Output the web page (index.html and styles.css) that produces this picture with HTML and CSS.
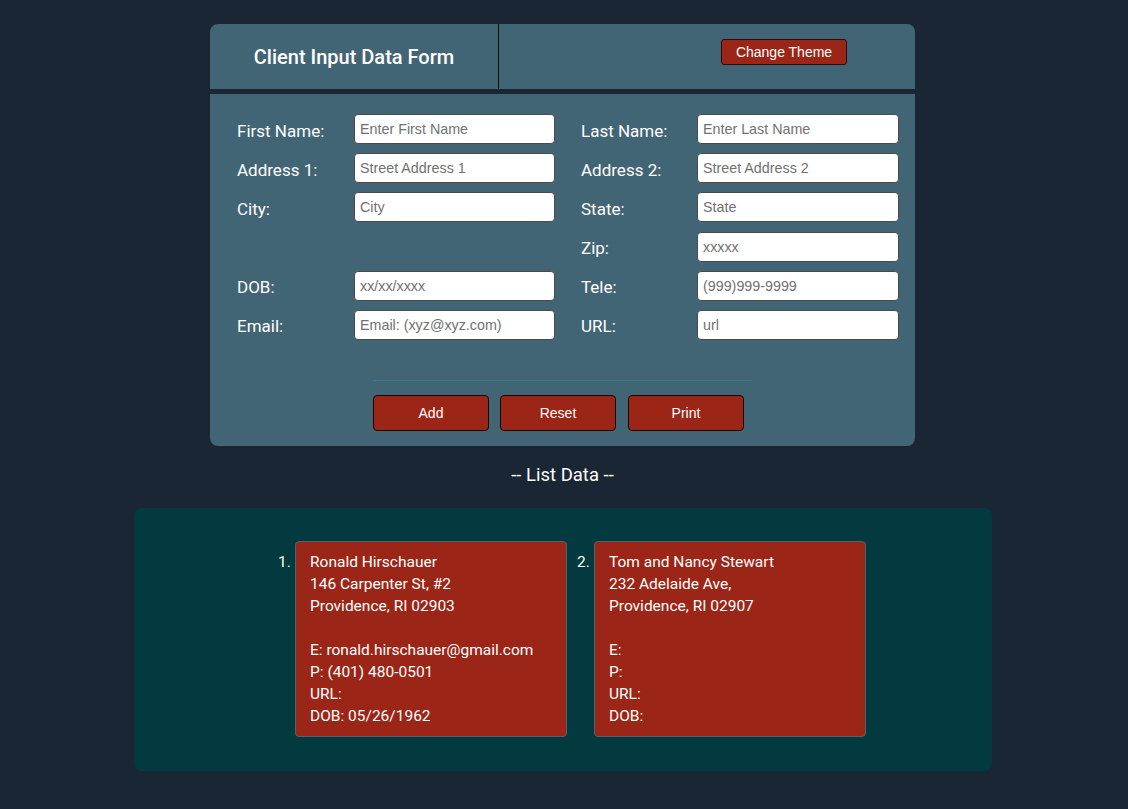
FILE: index.html
```html
<!DOCTYPE html>
<html>
<head>
<meta charset="utf-8">
<title>Client Input Data Form</title>
<link rel="stylesheet" href="styles.css">
</head>
<body>
<div class="page">
  <section class="form-panel">
    <header class="form-header">
      <div class="title-cell"><h1>Client Input Data Form</h1></div>
      <div class="theme-cell"><button class="theme-btn">Change Theme</button></div>
    </header>
    <form class="form-body">
      <div class="grid">
        <label>First Name:</label><input placeholder="Enter First Name">
        <label>Last Name:</label><input class="r" placeholder="Enter Last Name">
        <label>Address 1:</label><input placeholder="Street Address 1">
        <label>Address 2:</label><input class="r" placeholder="Street Address 2">
        <label>City:</label><input placeholder="City">
        <label>State:</label><input class="r" placeholder="State">
        <span></span><span></span>
        <label>Zip:</label><input class="r" placeholder="xxxxx">
        <label>DOB:</label><input placeholder="xx/xx/xxxx">
        <label>Tele:</label><input class="r" placeholder="(999)999-9999">
        <label>Email:</label><input placeholder="Email: (xyz@xyz.com)">
        <label>URL:</label><input class="r" placeholder="url">
      </div>
      <div class="actions">
        <hr class="sep">
        <div class="btns">
          <button type="button" class="btn">Add</button>
          <button type="button" class="btn">Reset</button>
          <button type="button" class="btn">Print</button>
        </div>
      </div>
    </form>
  </section>

  <h2 class="list-title">-- List Data --</h2>

  <section class="list-panel">
    <ol class="cards">
      <li class="item">
        <div class="card">
          <div>Ronald Hirschauer</div>
          <div>146 Carpenter St, #2</div>
          <div>Providence, RI 02903</div>
          <div>&nbsp;</div>
          <div>E: ronald.hirschauer@gmail.com</div>
          <div>P: (401) 480-0501</div>
          <div>URL:</div>
          <div>DOB: 05/26/1962</div>
        </div>
      </li>
      <li class="item">
        <div class="card">
          <div>Tom and Nancy Stewart</div>
          <div>232 Adelaide Ave,</div>
          <div>Providence, RI 02907</div>
          <div>&nbsp;</div>
          <div>E:</div>
          <div>P:</div>
          <div>URL:</div>
          <div>DOB:</div>
        </div>
      </li>
    </ol>
  </section>
</div>
</body>
</html>
```

FILE: styles.css
```css
html, body {
  margin: 0;
  padding: 0;
  background: #1a2633;
}
body {
  font-family: Roboto, "Liberation Sans", Arial, sans-serif;
  color: #ffffff;
}
.page {
  width: 1125px;
  padding-top: 24px;
  display: flex;
  flex-direction: column;
  align-items: center;
}
.form-panel {
  width: 705px;
  display: flex;
  flex-direction: column;
  gap: 5px;
}
.form-header {
  height: 65px;
  background: #426576;
  border-radius: 8px 8px 0 0;
  display: flex;
}
.title-cell {
  width: 288px;
  border-right: 1px solid #111;
  display: flex;
  align-items: center;
  justify-content: center;
}
.title-cell h1 {
  margin: 0;
  font-size: 20px;
  font-weight: 500;
  color: #fff;
}
.theme-cell {
  flex: 1;
  padding: 15px 0 0 222px;
}
.theme-btn {
  width: 126px;
  height: 26px;
  background: #9b2516;
  color: #fff;
  border: 1px solid #2a0c08;
  border-radius: 3px;
  font-family: "Liberation Sans", Arial, sans-serif;
  font-size: 14px;
  padding: 0;
}
.form-body {
  margin: 0;
  background: #426576;
  border-radius: 0 0 8px 8px;
  padding: 20px 17px 15px 27px;
}
.grid {
  display: grid;
  grid-template-columns: 117px 227px 116px 201px;
  grid-auto-rows: 30px;
  row-gap: 9.2px;
  align-items: center;
}
.grid label {
  font-size: 17px;
  color: #fff;
  padding-top: 3px;
}
.grid input {
  width: 201px;
  height: 30px;
  box-sizing: border-box;
  border: 1px solid #4a4a4a;
  border-radius: 4px;
  background: #fff;
  padding: 0 5px;
  font-family: "Liberation Sans", Arial, sans-serif;
  font-size: 14.3px;
  color: #222;
}
.grid input.r {
  width: 202px;
}
.grid input::placeholder {
  color: #717171;
}
.actions {
  width: 379px;
  margin: 40px auto 0 auto;
  position: relative;
  left: -5px;
}
.sep {
  margin: 0;
  border: 0;
  height: 1px;
  background: #3c7a87;
}
.btns {
  margin-top: 14px;
  display: flex;
  gap: 11px;
}
.btn {
  width: 116px;
  height: 36px;
  background: #9b2516;
  color: #fff;
  border: 1px solid #1a0704;
  border-radius: 4px;
  font-family: "Liberation Sans", Arial, sans-serif;
  font-size: 14px;
  padding: 0;
}
.btn + .btn + .btn {
  margin-left: 1px;
}
.list-title {
  margin: 18px 0 22px 0;
  font-size: 18.5px;
  font-weight: 400;
  line-height: 22px;
  color: #fff;
}
.list-panel {
  width: 858px;
  box-sizing: border-box;
  background: #033a40;
  border-radius: 7px;
  padding: 33px 0 34px 19px;
}
.cards {
  list-style: none;
  margin: 0;
  padding: 0;
  display: flex;
  justify-content: center;
  gap: 10px;
  counter-reset: item;
}
.item {
  counter-increment: item;
  display: flex;
  align-items: flex-start;
  font-size: 15.5px;
}
.item::before {
  content: counter(item) ".";
  width: 17px;
  line-height: 22px;
  padding-top: 10px;
  color: #fff;
}
.card {
  width: 272px;
  box-sizing: border-box;
  background: #9b2516;
  border: 1px solid #4f6470;
  border-radius: 4px;
  padding: 9px 14px 9px 14px;
  line-height: 22px;
  color: #fff;
}
```
